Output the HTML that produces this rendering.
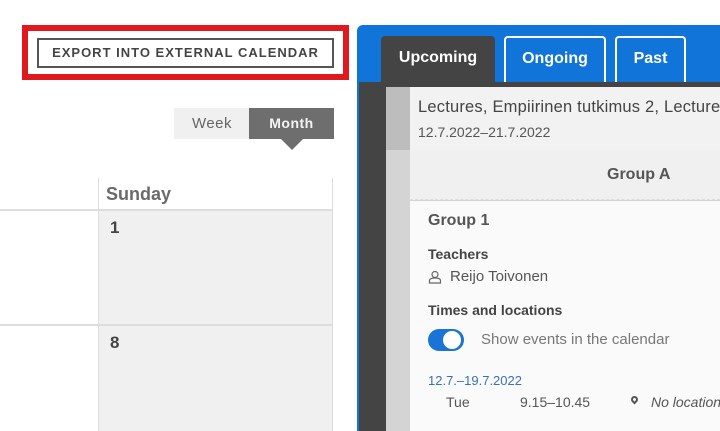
<!DOCTYPE html>
<html><head><style>
*{margin:0;padding:0;box-sizing:border-box}
body{width:720px;height:431px;overflow:hidden;background:#fff;font-family:"Liberation Sans",sans-serif;position:relative}
.a{position:absolute}
</style></head><body>
<div class="a" style="left:22px;top:25px;width:327px;height:55px;border:6px solid #e0191e"></div>
<div class="a" style="left:37px;top:38px;width:297px;height:30px;border:2px solid #555;color:#444;font-weight:bold;font-size:13px;letter-spacing:1px;text-align:center;line-height:26px">EXPORT INTO EXTERNAL CALENDAR</div>
<div class="a" style="left:174px;top:108px;width:76px;height:31px;background:#f0f0f0;color:#666;font-size:15px;text-align:center;line-height:31px;letter-spacing:.5px">Week</div>
<div class="a" style="left:249px;top:108px;width:85px;height:31px;background:#6e6e6e;color:#f4f4f4;font-weight:bold;font-size:14px;text-align:center;line-height:31px;letter-spacing:.5px">Month</div>
<div class="a" style="left:281px;top:139px;border-left:11px solid transparent;border-right:11px solid transparent;border-top:11px solid #6e6e6e"></div>
<div class="a" style="left:98px;top:210px;width:235px;height:221px;background:#f0f0f0"></div>
<div class="a" style="left:98px;top:178px;width:1px;height:253px;background:#ddd"></div>
<div class="a" style="left:332px;top:178px;width:1px;height:253px;background:#ddd"></div>
<div class="a" style="left:0;top:209px;width:333px;height:2px;background:#ddd"></div>
<div class="a" style="left:0;top:324px;width:333px;height:2px;background:#ddd"></div>
<div class="a" style="left:106px;top:184px;font-size:18px;font-weight:bold;color:#6a6a6a">Sunday</div>
<div class="a" style="left:110px;top:218px;font-size:17px;font-weight:bold;color:#444">1</div>
<div class="a" style="left:110px;top:333px;font-size:17px;font-weight:bold;color:#444">8</div>

<div class="a" style="left:357px;top:25px;width:363px;height:406px;background:#1174d8;border-radius:6px 0 0 0"></div>
<div class="a" style="left:381px;top:36px;width:114px;height:50px;background:#444;border-radius:4px 4px 0 0;color:#fff;font-weight:bold;font-size:16px;text-align:center;line-height:44px">Upcoming</div>
<div class="a" style="left:504px;top:36px;width:102px;height:47px;border:2px solid #fff;border-bottom:none;border-radius:4px 4px 0 0;color:#fff;font-weight:bold;font-size:16px;text-align:center;line-height:42px">Ongoing</div>
<div class="a" style="left:615px;top:36px;width:71px;height:47px;border:2px solid #fff;border-bottom:none;border-radius:4px 4px 0 0;color:#fff;font-weight:bold;font-size:16px;text-align:center;line-height:42px">Past</div>
<div class="a" style="left:359px;top:82px;width:361px;height:349px;background:#444"></div>
<div class="a" style="left:386px;top:87px;width:334px;height:344px;background:#d4d4d4"></div>
<div class="a" style="left:386px;top:87px;width:24px;height:63px;background:#bdbdbd"></div>
<div class="a" style="left:410px;top:87px;width:310px;height:63px;background:#f2f2f2"></div>
<div class="a" style="left:410px;top:150px;width:310px;height:50px;background:#f0f0f0;border-bottom:1px dashed #ddd"></div>
<div class="a" style="left:410px;top:201px;width:310px;height:230px;background:#fafafa"></div>
<div class="a" style="left:418px;top:98px;font-size:16.5px;color:#444;white-space:nowrap;letter-spacing:.2px">Lectures, Empiirinen tutkimus 2, Lecture</div>
<div class="a" style="left:418px;top:124px;font-size:14px;color:#555">12.7.2022–21.7.2022</div>
<div class="a" style="left:607px;top:166px;font-size:16px;font-weight:bold;color:#555">Group A</div>
<div class="a" style="left:428px;top:212px;font-size:16px;font-weight:bold;color:#555">Group 1</div>
<div class="a" style="left:428px;top:246px;font-size:14px;font-weight:bold;color:#444">Teachers</div>
<svg class="a" style="left:428px;top:270px" width="14" height="14" viewBox="0 0 14 14"><circle cx="7" cy="4.5" r="3" fill="none" stroke="#666" stroke-width="1.2"/><path d="M1.5 13v-2.5c0-1.5 2-2.5 5.5-2.5s5.5 1 5.5 2.5V13z" fill="none" stroke="#666" stroke-width="1.2"/></svg>
<div class="a" style="left:450px;top:268px;font-size:15px;color:#555">Reijo Toivonen</div>
<div class="a" style="left:428px;top:302px;font-size:14px;font-weight:bold;color:#444">Times and locations</div>
<div class="a" style="left:428px;top:329px;width:36px;height:22px;border-radius:11px;background:#1a73d6"></div>
<div class="a" style="left:443px;top:331px;width:18px;height:18px;border-radius:50%;background:#fff"></div>
<div class="a" style="left:481px;top:331px;font-size:15px;color:#777">Show events in the calendar</div>
<div class="a" style="left:428px;top:373px;font-size:13px;color:#3a70b8">12.7.–19.7.2022</div>
<div class="a" style="left:446px;top:394px;font-size:14px;color:#555">Tue</div>
<div class="a" style="left:520px;top:394px;font-size:14px;color:#555">9.15–10.45</div>
<div class="a" style="left:631px;top:396px;width:7px;height:7px;border:2px solid #555;border-radius:50% 50% 50% 0;transform:rotate(-45deg)"></div>
<div class="a" style="left:651px;top:394px;font-size:14px;font-style:italic;color:#555;white-space:nowrap">No location</div>
</body></html>
